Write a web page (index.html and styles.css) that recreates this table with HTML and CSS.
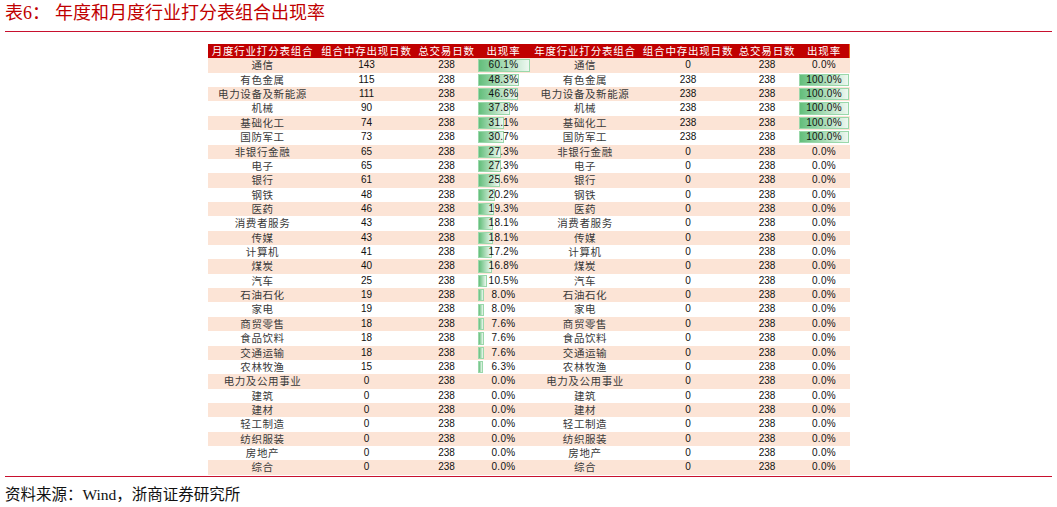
FILE: index.html
```html
<!DOCTYPE html>
<html lang="zh-CN">
<head>
<meta charset="utf-8">
<title>表6：年度和月度行业打分表组合出现率</title>
<link rel="stylesheet" href="styles.css">
</head>
<body>
<div class="page">
  <div class="title"><span class="num">表6：</span>年度和月度行业打分表组合出现率</div>
  <div class="table-wrap">
    <table>
      <colgroup>
        <col style="width:110px"><col style="width:98px"><col style="width:62px"><col style="width:52px">
        <col style="width:111px"><col style="width:95px"><col style="width:63px"><col style="width:51px">
      </colgroup>
      <thead>
        <tr>
          <th>月度行业打分表组合</th><th>组合中存出现日数</th><th>总交易日数</th><th>出现率</th>
          <th>年度行业打分表组合</th><th>组合中存出现日数</th><th>总交易日数</th><th class="last">出现率</th>
        </tr>
      </thead>
      <tbody>
        <tr><td class="name">通信</td><td class="n">143</td><td class="n">238</td><td class="rate"><div class="stack"><span class="bar" style="width:52px"></span><span class="pct">60.1%</span></div></td><td class="name">通信</td><td class="n">0</td><td class="n">238</td><td class="rate"><div class="stack"><span class="pct">0.0%</span></div></td></tr>
        <tr><td class="name">有色金属</td><td class="n">115</td><td class="n">238</td><td class="rate"><div class="stack"><span class="bar" style="width:41.8px"></span><span class="pct">48.3%</span></div></td><td class="name">有色金属</td><td class="n">238</td><td class="n">238</td><td class="rate"><div class="stack"><span class="bar" style="width:50px"></span><span class="pct">100.0%</span></div></td></tr>
        <tr><td class="name">电力设备及新能源</td><td class="n">111</td><td class="n">238</td><td class="rate"><div class="stack"><span class="bar" style="width:40.3px"></span><span class="pct">46.6%</span></div></td><td class="name">电力设备及新能源</td><td class="n">238</td><td class="n">238</td><td class="rate"><div class="stack"><span class="bar" style="width:50px"></span><span class="pct">100.0%</span></div></td></tr>
        <tr><td class="name">机械</td><td class="n">90</td><td class="n">238</td><td class="rate"><div class="stack"><span class="bar" style="width:32.7px"></span><span class="pct">37.8%</span></div></td><td class="name">机械</td><td class="n">238</td><td class="n">238</td><td class="rate"><div class="stack"><span class="bar" style="width:50px"></span><span class="pct">100.0%</span></div></td></tr>
        <tr><td class="name">基础化工</td><td class="n">74</td><td class="n">238</td><td class="rate"><div class="stack"><span class="bar" style="width:26.9px"></span><span class="pct">31.1%</span></div></td><td class="name">基础化工</td><td class="n">238</td><td class="n">238</td><td class="rate"><div class="stack"><span class="bar" style="width:50px"></span><span class="pct">100.0%</span></div></td></tr>
        <tr><td class="name">国防军工</td><td class="n">73</td><td class="n">238</td><td class="rate"><div class="stack"><span class="bar" style="width:26.6px"></span><span class="pct">30.7%</span></div></td><td class="name">国防军工</td><td class="n">238</td><td class="n">238</td><td class="rate"><div class="stack"><span class="bar" style="width:50px"></span><span class="pct">100.0%</span></div></td></tr>
        <tr><td class="name">非银行金融</td><td class="n">65</td><td class="n">238</td><td class="rate"><div class="stack"><span class="bar" style="width:23.6px"></span><span class="pct">27.3%</span></div></td><td class="name">非银行金融</td><td class="n">0</td><td class="n">238</td><td class="rate"><div class="stack"><span class="pct">0.0%</span></div></td></tr>
        <tr><td class="name">电子</td><td class="n">65</td><td class="n">238</td><td class="rate"><div class="stack"><span class="bar" style="width:23.6px"></span><span class="pct">27.3%</span></div></td><td class="name">电子</td><td class="n">0</td><td class="n">238</td><td class="rate"><div class="stack"><span class="pct">0.0%</span></div></td></tr>
        <tr><td class="name">银行</td><td class="n">61</td><td class="n">238</td><td class="rate"><div class="stack"><span class="bar" style="width:22.2px"></span><span class="pct">25.6%</span></div></td><td class="name">银行</td><td class="n">0</td><td class="n">238</td><td class="rate"><div class="stack"><span class="pct">0.0%</span></div></td></tr>
        <tr><td class="name">钢铁</td><td class="n">48</td><td class="n">238</td><td class="rate"><div class="stack"><span class="bar" style="width:17.5px"></span><span class="pct">20.2%</span></div></td><td class="name">钢铁</td><td class="n">0</td><td class="n">238</td><td class="rate"><div class="stack"><span class="pct">0.0%</span></div></td></tr>
        <tr><td class="name">医药</td><td class="n">46</td><td class="n">238</td><td class="rate"><div class="stack"><span class="bar" style="width:16.7px"></span><span class="pct">19.3%</span></div></td><td class="name">医药</td><td class="n">0</td><td class="n">238</td><td class="rate"><div class="stack"><span class="pct">0.0%</span></div></td></tr>
        <tr><td class="name">消费者服务</td><td class="n">43</td><td class="n">238</td><td class="rate"><div class="stack"><span class="bar" style="width:15.7px"></span><span class="pct">18.1%</span></div></td><td class="name">消费者服务</td><td class="n">0</td><td class="n">238</td><td class="rate"><div class="stack"><span class="pct">0.0%</span></div></td></tr>
        <tr><td class="name">传媒</td><td class="n">43</td><td class="n">238</td><td class="rate"><div class="stack"><span class="bar" style="width:15.7px"></span><span class="pct">18.1%</span></div></td><td class="name">传媒</td><td class="n">0</td><td class="n">238</td><td class="rate"><div class="stack"><span class="pct">0.0%</span></div></td></tr>
        <tr><td class="name">计算机</td><td class="n">41</td><td class="n">238</td><td class="rate"><div class="stack"><span class="bar" style="width:14.9px"></span><span class="pct">17.2%</span></div></td><td class="name">计算机</td><td class="n">0</td><td class="n">238</td><td class="rate"><div class="stack"><span class="pct">0.0%</span></div></td></tr>
        <tr><td class="name">煤炭</td><td class="n">40</td><td class="n">238</td><td class="rate"><div class="stack"><span class="bar" style="width:14.5px"></span><span class="pct">16.8%</span></div></td><td class="name">煤炭</td><td class="n">0</td><td class="n">238</td><td class="rate"><div class="stack"><span class="pct">0.0%</span></div></td></tr>
        <tr><td class="name">汽车</td><td class="n">25</td><td class="n">238</td><td class="rate"><div class="stack"><span class="bar" style="width:9.1px"></span><span class="pct">10.5%</span></div></td><td class="name">汽车</td><td class="n">0</td><td class="n">238</td><td class="rate"><div class="stack"><span class="pct">0.0%</span></div></td></tr>
        <tr><td class="name">石油石化</td><td class="n">19</td><td class="n">238</td><td class="rate"><div class="stack"><span class="bar" style="width:6.9px"></span><span class="pct">8.0%</span></div></td><td class="name">石油石化</td><td class="n">0</td><td class="n">238</td><td class="rate"><div class="stack"><span class="pct">0.0%</span></div></td></tr>
        <tr><td class="name">家电</td><td class="n">19</td><td class="n">238</td><td class="rate"><div class="stack"><span class="bar" style="width:6.9px"></span><span class="pct">8.0%</span></div></td><td class="name">家电</td><td class="n">0</td><td class="n">238</td><td class="rate"><div class="stack"><span class="pct">0.0%</span></div></td></tr>
        <tr><td class="name">商贸零售</td><td class="n">18</td><td class="n">238</td><td class="rate"><div class="stack"><span class="bar" style="width:6.6px"></span><span class="pct">7.6%</span></div></td><td class="name">商贸零售</td><td class="n">0</td><td class="n">238</td><td class="rate"><div class="stack"><span class="pct">0.0%</span></div></td></tr>
        <tr><td class="name">食品饮料</td><td class="n">18</td><td class="n">238</td><td class="rate"><div class="stack"><span class="bar" style="width:6.6px"></span><span class="pct">7.6%</span></div></td><td class="name">食品饮料</td><td class="n">0</td><td class="n">238</td><td class="rate"><div class="stack"><span class="pct">0.0%</span></div></td></tr>
        <tr><td class="name">交通运输</td><td class="n">18</td><td class="n">238</td><td class="rate"><div class="stack"><span class="bar" style="width:6.6px"></span><span class="pct">7.6%</span></div></td><td class="name">交通运输</td><td class="n">0</td><td class="n">238</td><td class="rate"><div class="stack"><span class="pct">0.0%</span></div></td></tr>
        <tr><td class="name">农林牧渔</td><td class="n">15</td><td class="n">238</td><td class="rate"><div class="stack"><span class="bar" style="width:5.7px"></span><span class="pct">6.3%</span></div></td><td class="name">农林牧渔</td><td class="n">0</td><td class="n">238</td><td class="rate"><div class="stack"><span class="pct">0.0%</span></div></td></tr>
        <tr><td class="name">电力及公用事业</td><td class="n">0</td><td class="n">238</td><td class="rate"><div class="stack"><span class="pct">0.0%</span></div></td><td class="name">电力及公用事业</td><td class="n">0</td><td class="n">238</td><td class="rate"><div class="stack"><span class="pct">0.0%</span></div></td></tr>
        <tr><td class="name">建筑</td><td class="n">0</td><td class="n">238</td><td class="rate"><div class="stack"><span class="pct">0.0%</span></div></td><td class="name">建筑</td><td class="n">0</td><td class="n">238</td><td class="rate"><div class="stack"><span class="pct">0.0%</span></div></td></tr>
        <tr><td class="name">建材</td><td class="n">0</td><td class="n">238</td><td class="rate"><div class="stack"><span class="pct">0.0%</span></div></td><td class="name">建材</td><td class="n">0</td><td class="n">238</td><td class="rate"><div class="stack"><span class="pct">0.0%</span></div></td></tr>
        <tr><td class="name">轻工制造</td><td class="n">0</td><td class="n">238</td><td class="rate"><div class="stack"><span class="pct">0.0%</span></div></td><td class="name">轻工制造</td><td class="n">0</td><td class="n">238</td><td class="rate"><div class="stack"><span class="pct">0.0%</span></div></td></tr>
        <tr><td class="name">纺织服装</td><td class="n">0</td><td class="n">238</td><td class="rate"><div class="stack"><span class="pct">0.0%</span></div></td><td class="name">纺织服装</td><td class="n">0</td><td class="n">238</td><td class="rate"><div class="stack"><span class="pct">0.0%</span></div></td></tr>
        <tr><td class="name">房地产</td><td class="n">0</td><td class="n">238</td><td class="rate"><div class="stack"><span class="pct">0.0%</span></div></td><td class="name">房地产</td><td class="n">0</td><td class="n">238</td><td class="rate"><div class="stack"><span class="pct">0.0%</span></div></td></tr>
        <tr><td class="name">综合</td><td class="n">0</td><td class="n">238</td><td class="rate"><div class="stack"><span class="pct">0.0%</span></div></td><td class="name">综合</td><td class="n">0</td><td class="n">238</td><td class="rate"><div class="stack"><span class="pct">0.0%</span></div></td></tr>
      </tbody>
    </table>
  </div>
  <div class="source">资料来源：Wind，浙商证券研究所</div>
</div>
</body>
</html>
```
FILE: styles.css
```css
html, body {
  margin: 0;
  padding: 0;
  background: #ffffff;
}

body {
  font-family: "Noto Sans CJK SC", sans-serif;
  color: #222222;
}

.page {
  padding: 0 5px;
}

.title {
  height: 31px;
  line-height: 27px;
  color: #c00000;
  font-family: "Liberation Serif", "Noto Sans CJK SC", serif;
  font-size: 18px;
  white-space: nowrap;
  border-bottom: 1.5px solid #c8102e;
}

.title .num {
  margin-right: 5px;
}

.table-wrap {
  margin-top: 12px;
  padding-bottom: 1px;
  border-bottom: 1.5px solid #c8102e;
}

table {
  border-collapse: collapse;
  table-layout: fixed;
  width: 642px;
  margin: 0 auto;
}

th, td {
  padding: 0;
  height: 14.36px;
  line-height: 14.36px;
  text-align: center;
  white-space: nowrap;
  overflow: visible;
  vertical-align: middle;
}

th {
  background: #c00000;
  color: #ffffff;
  font-weight: normal;
  font-size: 10.5px;
  letter-spacing: 0.8px;
}

th.last {
  box-shadow: inset -1px 0 0 #e8731f;
}

tbody tr:nth-child(odd) td {
  background: #fce4d6;
}

td.name {
  font-size: 10.5px;
  letter-spacing: 0.6px;
  color: #3a3a3a;
}

td.n {
  font-family: "Liberation Sans", sans-serif;
  font-size: 10px;
  color: #111111;
}

.stack {
  display: grid;
  height: 14.36px;
}

.stack > * {
  grid-area: 1 / 1;
}

.bar {
  justify-self: start;
  align-self: center;
  height: 12.3px;
  box-sizing: border-box;
  border: 1px solid #9ad8aa;
  background: linear-gradient(to right, #63be7b, #eef8f1);
}

.pct {
  font-family: "Liberation Sans", sans-serif;
  font-size: 10px;
  letter-spacing: 0.3px;
  color: #111111;
  text-align: center;
  line-height: 14.36px;
}

.source {
  margin-top: 8px;
  line-height: 20px;
  font-size: 15.5px;
  font-family: "Liberation Serif", "Noto Sans CJK SC", serif;
  color: #111111;
  white-space: nowrap;
}
```
